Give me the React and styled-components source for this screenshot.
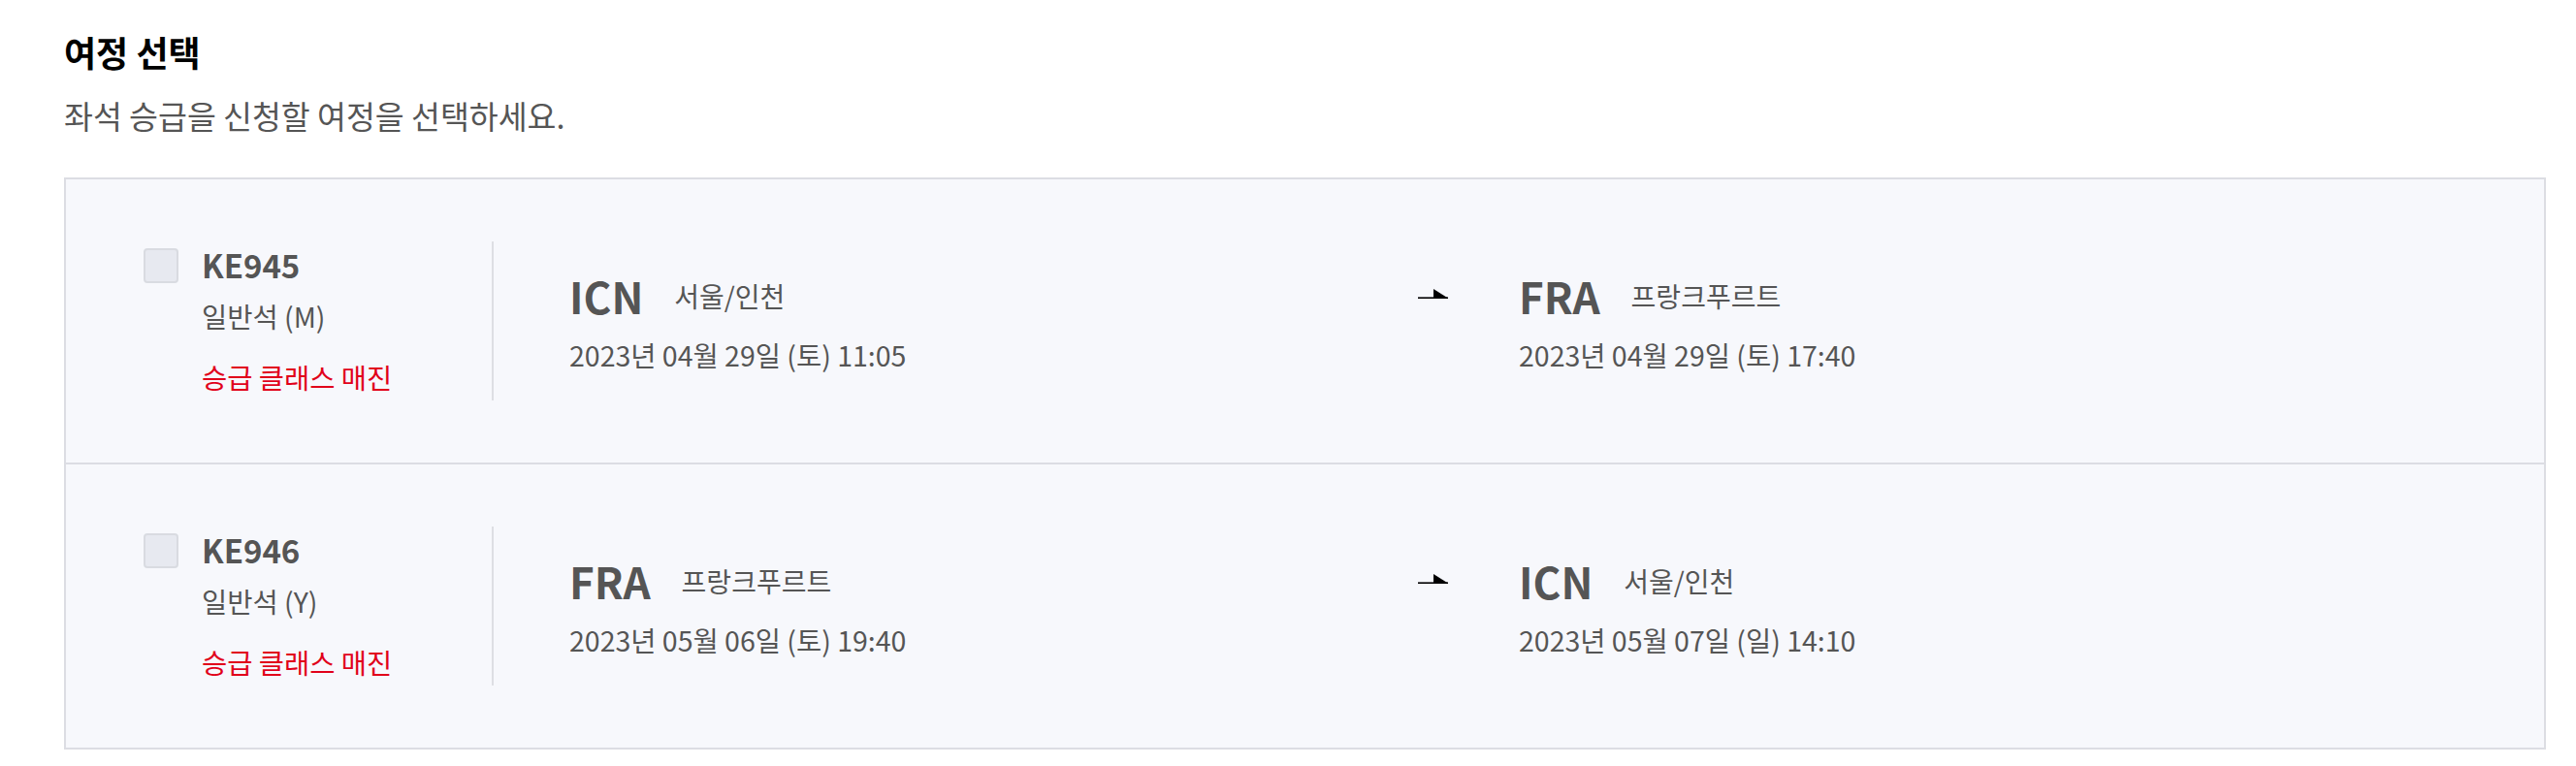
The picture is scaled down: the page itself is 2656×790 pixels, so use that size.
import React from 'react';
import styled, { createGlobalStyle } from 'styled-components';

const GlobalStyle = createGlobalStyle`
    body {
        margin: 0;
        background: #fff;
        font-family: 'Noto Sans CJK KR', 'Noto Sans', sans-serif;
        color: #555;
    }
`;

const Page = styled.main`
    padding: 29px 31px 0 66px;
`;

const Title = styled.h2`
    margin: 0;
    font-size: 36px;
    line-height: 48px;
    font-weight: 700;
    color: #000;
`;

const Lead = styled.p`
    margin: 20px 0 0;
    font-size: 32.5px;
    line-height: 44px;
    color: #555;
`;

const JourneyList = styled.ul`
    list-style: none;
    margin: 42px 0 0;
    padding: 0;
    border: 2px solid #dcdde3;
    background: #f7f8fc;
`;

const JourneyRow = styled.li`
    display: flex;
    align-items: center;
    padding: 64px 0;
    & + & {
        border-top: 2px solid #dcdde3;
    }
`;

const FlightInfo = styled.label`
    display: flex;
    align-items: flex-start;
    gap: 24px;
    width: 359px;
    min-height: 164px;
    margin-left: 80px;
    border-right: 2px solid #dedfe4;
    box-sizing: content-box;
`;

const Check = styled.input.attrs({ type: 'checkbox' })`
    appearance: none;
    flex: 0 0 auto;
    width: 36px;
    height: 36px;
    margin: 7px 0 0;
    border: 2px solid #d9dbe1;
    border-radius: 4px;
    background: #e7e9f0;
    box-sizing: border-box;
`;

const FlightText = styled.div`
    display: flex;
    flex-direction: column;
`;

const FlightNo = styled.strong`
    font-size: 33px;
    line-height: 48px;
    font-weight: 700;
    color: #555;
`;

const Cabin = styled.span`
    margin-top: 9px;
    font-size: 28.5px;
    line-height: 40px;
    color: #555;
`;

const Status = styled.span`
    margin-top: 23px;
    font-size: 28.5px;
    line-height: 40px;
    color: #e1001a;
`;

const Route = styled.div`
    flex: 1;
    display: grid;
    grid-template-columns: 1fr 1fr;
    padding: 0 78px;
`;

const Leg = styled.div`
    display: flex;
    justify-content: space-between;
    align-items: flex-start;
`;

const Stop = styled.div`
    display: flex;
    flex-direction: column;
`;

const CodeLine = styled.div`
    display: flex;
    align-items: center;
    gap: 32px;
`;

const Code = styled.span`
    font-size: 44px;
    line-height: 56px;
    font-weight: 700;
    color: #555;
`;

const City = styled.span`
    font-size: 28px;
    color: #555;
`;

const When = styled.span`
    margin-top: 13px;
    font-size: 28.5px;
    line-height: 40px;
    color: #555;
`;

const ArrowIcon = styled.svg`
    flex: 0 0 auto;
    margin: 21px 73px 0 0;
`;

const Arrow = () => (
    <ArrowIcon width="31" height="10" viewBox="0 0 31 10" aria-hidden="true">
        <rect x="0" y="8.4" width="31" height="1.6" fill="#000" />
        <path d="M16 0 L31 9.5 L16 9.5 Z" fill="#000" />
    </ArrowIcon>
);

const journeys = [
    {
        flight: 'KE945',
        cabin: '일반석 (M)',
        from: { code: 'ICN', city: '서울/인천', when: '2023년 04월 29일 (토) 11:05' },
        to: { code: 'FRA', city: '프랑크푸르트', when: '2023년 04월 29일 (토) 17:40' },
    },
    {
        flight: 'KE946',
        cabin: '일반석 (Y)',
        from: { code: 'FRA', city: '프랑크푸르트', when: '2023년 05월 06일 (토) 19:40' },
        to: { code: 'ICN', city: '서울/인천', when: '2023년 05월 07일 (일) 14:10' },
    },
];

const StopBlock = ({ stop }) => (
    <Stop>
        <CodeLine>
            <Code>{stop.code}</Code>
            <City>{stop.city}</City>
        </CodeLine>
        <When>{stop.when}</When>
    </Stop>
);

const App = () => {
    return (
        <Page>
            <GlobalStyle />
            <Title>여정 선택</Title>
            <Lead>좌석 승급을 신청할 여정을 선택하세요.</Lead>
            <JourneyList>
                {journeys.map((j) => (
                    <JourneyRow key={j.flight}>
                        <FlightInfo>
                            <Check />
                            <FlightText>
                                <FlightNo>{j.flight}</FlightNo>
                                <Cabin>{j.cabin}</Cabin>
                                <Status>승급 클래스 매진</Status>
                            </FlightText>
                        </FlightInfo>
                        <Route>
                            <Leg>
                                <StopBlock stop={j.from} />
                                <Arrow />
                            </Leg>
                            <StopBlock stop={j.to} />
                        </Route>
                    </JourneyRow>
                ))}
            </JourneyList>
        </Page>
    );
};

export default App;
